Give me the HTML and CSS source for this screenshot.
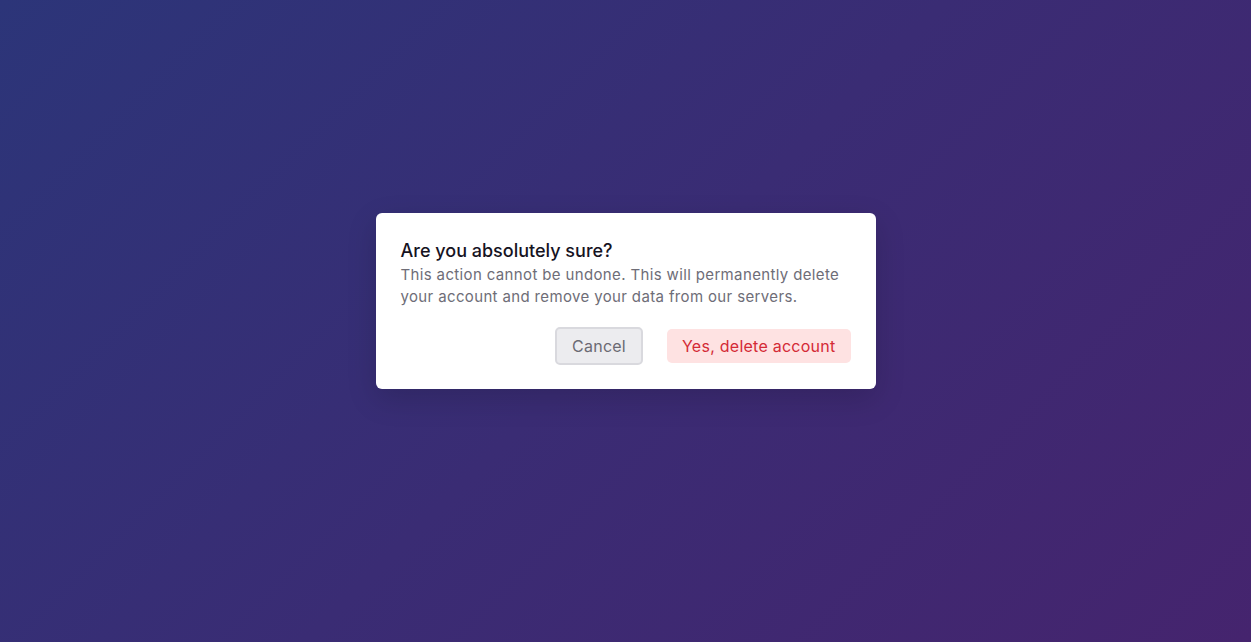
FILE: index.html
```html
<!DOCTYPE html>
<html lang="en">
<head>
<meta charset="utf-8">
<title>Delete account</title>
<link rel="stylesheet" href="styles.css">
</head>
<body>
<div class="overlay">
  <div class="dialog" role="alertdialog" aria-labelledby="dlg-title" aria-describedby="dlg-desc">
    <h2 class="dialog-title" id="dlg-title">Are you absolutely sure?</h2>
    <p class="dialog-desc" id="dlg-desc">This action cannot be undone. This will permanently delete your account and remove your data from our servers.</p>
    <div class="dialog-actions">
      <button class="btn btn-cancel" type="button">Cancel</button>
      <button class="btn btn-danger" type="button">Yes, delete account</button>
    </div>
  </div>
</div>
</body>
</html>
```

FILE: styles.css
```css
html, body {
  margin: 0;
  padding: 0;
  height: 100%;
}
body {
  font-family: Inter, "Open Sans", "Liberation Sans", sans-serif;
  background: linear-gradient(135deg, #2c3579 0%, #3a2c74 50%, #45246e 100%);
}
.overlay {
  height: 100%;
  box-sizing: border-box;
  padding-bottom: 40px;
  display: flex;
  align-items: center;
  justify-content: center;
}
.dialog {
  width: 500px;
  box-sizing: border-box;
  background: #ffffff;
  border-radius: 6px;
  padding: 25px 25px 24px;
  box-shadow: 0 10px 30px rgba(0, 0, 0, 0.15);
}
.dialog-title {
  margin: 0;
  font-size: 18px;
  line-height: 26px;
  font-weight: 500;
  color: #16131f;
}
.dialog-desc {
  margin: 0;
  font-size: 15px;
  line-height: 22px;
  letter-spacing: 0.36px;
  color: #6e6d77;
}
.dialog-actions {
  margin-top: 19px;
  display: flex;
  justify-content: flex-end;
  align-items: center;
  gap: 24px;
}
.btn {
  font-family: inherit;
  font-size: 16px;
  letter-spacing: 0.25px;
  border-radius: 5px;
  cursor: pointer;
}
.btn-cancel {
  height: 38px;
  padding: 0 15px;
  background: #ececef;
  border: 2px solid #d9d9de;
  color: #6b6a73;
}
.btn-danger {
  height: 34px;
  padding: 0 15px;
  background: #fee2e2;
  border: none;
  color: #d42a36;
}
```
